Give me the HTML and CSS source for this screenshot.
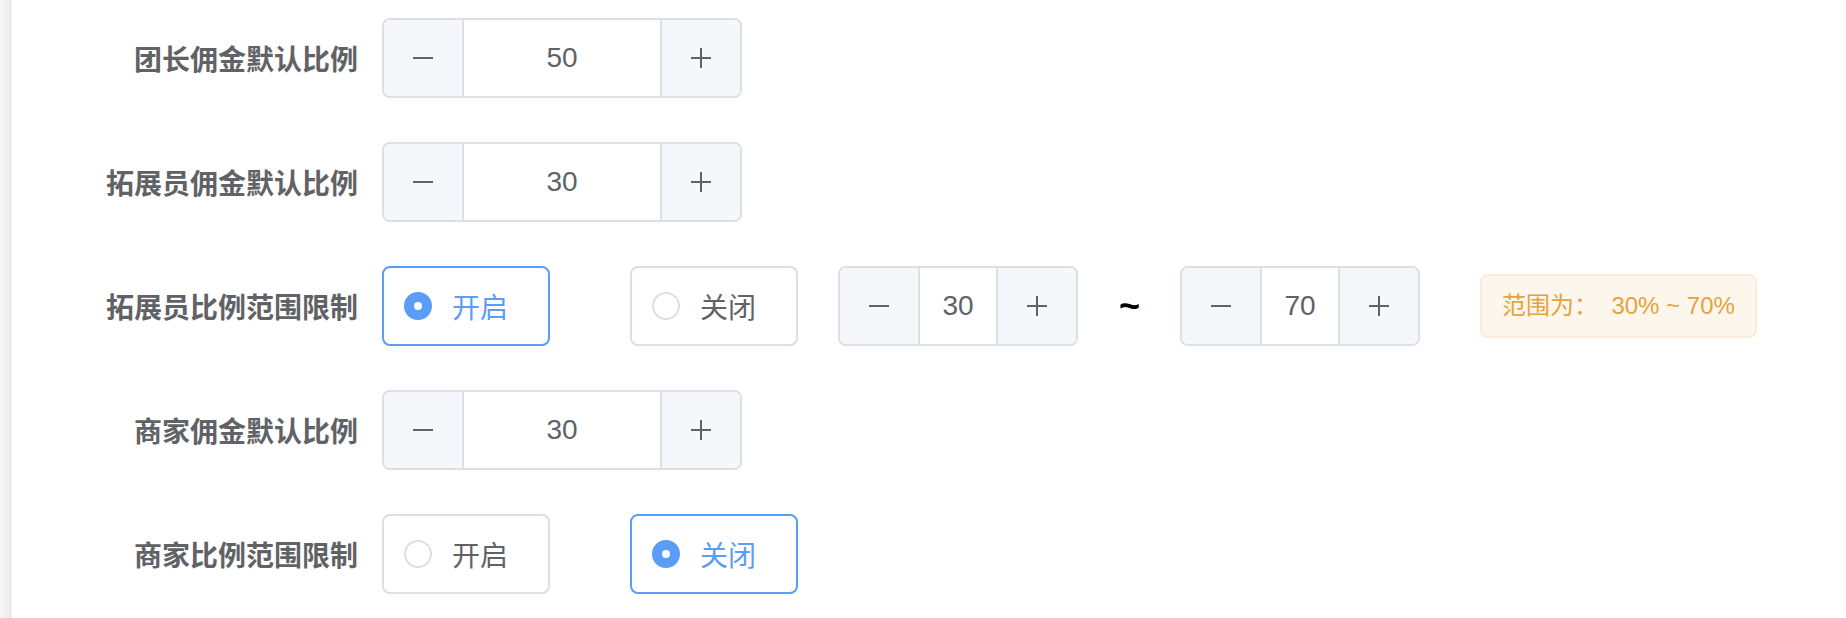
FILE: index.html
```html
<!DOCTYPE html>
<html lang="zh-CN">
<head>
  <meta charset="UTF-8" />
  <meta name="viewport" content="width=device-width, initial-scale=1" />
  <title>佣金设置</title>
  <link rel="stylesheet" href="styles.css">
</head>
<body>
  <div class="card">
    <form class="form">

      <div class="form-item">
        <label class="form-label">团长佣金默认比例</label>
        <div class="form-content">
          <div class="num-input">
            <span class="num-btn"><svg viewBox="0 0 22 22"><path d="M1 11h20"/></svg></span>
            <input class="num-value" type="text" value="50">
            <span class="num-btn"><svg viewBox="0 0 22 22"><path d="M1 11h20M11 1v20"/></svg></span>
          </div>
        </div>
      </div>

      <div class="form-item">
        <label class="form-label">拓展员佣金默认比例</label>
        <div class="form-content">
          <div class="num-input">
            <span class="num-btn"><svg viewBox="0 0 22 22"><path d="M1 11h20"/></svg></span>
            <input class="num-value" type="text" value="30">
            <span class="num-btn"><svg viewBox="0 0 22 22"><path d="M1 11h20M11 1v20"/></svg></span>
          </div>
        </div>
      </div>

      <div class="form-item">
        <label class="form-label">拓展员比例范围限制</label>
        <div class="form-content">
          <div class="radio-group">
            <label class="radio is-checked"><span class="radio-dot"></span><span class="radio-text">开启</span></label>
            <label class="radio"><span class="radio-dot"></span><span class="radio-text">关闭</span></label>
          </div>
          <div class="num-input small">
            <span class="num-btn"><svg viewBox="0 0 22 22"><path d="M1 11h20"/></svg></span>
            <input class="num-value" type="text" value="30">
            <span class="num-btn"><svg viewBox="0 0 22 22"><path d="M1 11h20M11 1v20"/></svg></span>
          </div>
          <span class="range-sep">~</span>
          <div class="num-input small">
            <span class="num-btn"><svg viewBox="0 0 22 22"><path d="M1 11h20"/></svg></span>
            <input class="num-value" type="text" value="70">
            <span class="num-btn"><svg viewBox="0 0 22 22"><path d="M1 11h20M11 1v20"/></svg></span>
          </div>
          <span class="tag-warning">范围为：  30% ~ 70%</span>
        </div>
      </div>

      <div class="form-item">
        <label class="form-label">商家佣金默认比例</label>
        <div class="form-content">
          <div class="num-input">
            <span class="num-btn"><svg viewBox="0 0 22 22"><path d="M1 11h20"/></svg></span>
            <input class="num-value" type="text" value="30">
            <span class="num-btn"><svg viewBox="0 0 22 22"><path d="M1 11h20M11 1v20"/></svg></span>
          </div>
        </div>
      </div>

      <div class="form-item">
        <label class="form-label">商家比例范围限制</label>
        <div class="form-content">
          <div class="radio-group">
            <label class="radio"><span class="radio-dot"></span><span class="radio-text">开启</span></label>
            <label class="radio is-checked"><span class="radio-dot"></span><span class="radio-text">关闭</span></label>
          </div>
        </div>
      </div>

    </form>
  </div>
</body>
</html>
```

FILE: styles.css
```css
body {
  margin: 0;
  font-family: 'Liberation Sans', 'Noto Sans CJK SC', sans-serif;
  color: #606266;
  background: linear-gradient(to right, #f7f7f7 0, #ebebeb 10px, #e2e2e2 11px, #fff 12px);
}
.card {
  margin-left: 12px;
  background: #fff;
  min-height: 618px;
}
.form {
  padding-top: 18px;
}
.form-item {
  display: flex;
  align-items: center;
  margin-bottom: 44px;
}
.form-label {
  width: 370px;
  box-sizing: border-box;
  padding-right: 24px;
  text-align: right;
  font-size: 28px;
  font-weight: 600;
  color: #606266;
}
.form-content {
  display: flex;
  align-items: center;
}

/* number input */
.num-input {
  display: flex;
  width: 360px;
  height: 80px;
  box-sizing: border-box;
  border: 2px solid #dcdfe6;
  border-radius: 8px;
  overflow: hidden;
  background: #fff;
}
.num-input.small {
  width: 240px;
}
.num-btn {
  flex: 0 0 78px;
  display: flex;
  align-items: center;
  justify-content: center;
  background: #f5f7fa;
}
.num-btn:first-child {
  border-right: 2px solid #dcdfe6;
}
.num-btn:last-child {
  border-left: 2px solid #dcdfe6;
}
.num-btn svg {
  width: 22px;
  height: 22px;
  fill: none;
  stroke: #606266;
  stroke-width: 2;
}
.num-value {
  flex: 1;
  min-width: 0;
  border: none;
  outline: none;
  padding: 0;
  text-align: center;
  font-family: inherit;
  font-size: 28px;
  color: #606266;
}

/* radios */
.radio-group {
  display: flex;
  gap: 80px;
  margin-right: 40px;
}
.radio-group:last-child {
  margin-right: 0;
}
.radio {
  display: flex;
  align-items: center;
  height: 80px;
  box-sizing: border-box;
  padding: 0 40px 0 20px;
  border: 2px solid #dcdfe6;
  border-radius: 8px;
  font-size: 28px;
  color: #606266;
}
.radio-dot {
  width: 28px;
  height: 28px;
  box-sizing: border-box;
  border: 2px solid #dcdfe6;
  border-radius: 50%;
  background: #fff;
  display: flex;
  align-items: center;
  justify-content: center;
}
.radio-text {
  padding-left: 20px;
}
.radio.is-checked {
  border-color: #5a9df8;
  color: #5a9df8;
}
.radio.is-checked .radio-dot {
  border-color: #5a9df8;
  background: #5a9df8;
}
.radio.is-checked .radio-dot::after {
  content: '';
  width: 8px;
  height: 8px;
  border-radius: 50%;
  background: #fff;
}

.range-sep {
  margin: 0 40px 0 41px;
  font-size: 36px;
  font-weight: bold;
  color: #000;
}

.tag-warning {
  margin-left: 60px;
  height: 64px;
  line-height: 60px;
  box-sizing: border-box;
  padding: 0 20px;
  border: 2px solid #faecd8;
  border-radius: 8px;
  background: #fdf6ec;
  color: #e6a23c;
  font-size: 24px;
  white-space: pre;
}
```
